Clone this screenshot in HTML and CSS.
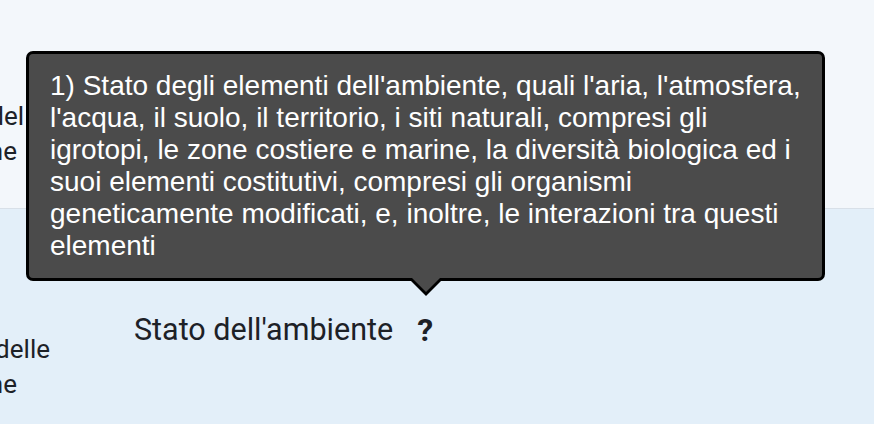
FILE: index.html
```html
<!DOCTYPE html>
<html lang="it">
<head>
<meta charset="utf-8">
<title>Stato dell'ambiente</title>
<link rel="stylesheet" href="styles.css">
</head>
<body>
  <div class="table">
    <div class="row row-top">
      <div class="label">
        <span class="line line-mid">Informazioni sullo stato del</span>
        <span class="line line-short">territorio e sulla gestione</span>
      </div>
    </div>
    <div class="row row-bottom">
      <div class="label">
        <span class="line">Informazioni sullo stato delle</span>
        <span class="line line-short">componenti e sulla gestione</span>
      </div>
      <div class="value">
        <span class="value-text">Stato dell'ambiente</span>
        <span class="help">?</span>
      </div>
    </div>
  </div>

  <div class="tooltip">
    1) Stato degli elementi dell'ambiente, quali l'aria, l'atmosfera,<br>
    l'acqua, il suolo, il territorio, i siti naturali, compresi gli<br>
    igrotopi, le zone costiere e marine, la diversità biologica ed i<br>
    suoi elementi costitutivi, compresi gli organismi<br>
    geneticamente modificati, e, inoltre, le interazioni tra questi<br>
    elementi
  </div>
</body>
</html>
```

FILE: styles.css
```css
html, body {
  margin: 0;
  padding: 0;
}

body {
  width: 874px;
  height: 424px;
  overflow: hidden;
  position: relative;
  background: #e3eff9;
  font-family: Roboto, "Open Sans", sans-serif;
  color: #1d2127;
}

.table {
  display: flex;
  flex-direction: column;
}

.row {
  display: flex;
  align-items: flex-start;
}

.row-top {
  height: 209px;
  box-sizing: border-box;
  background: #f3f7fb;
  border-bottom: 1px solid #d8e0e8;
  padding-top: 99px;
}

.row-bottom {
  height: 214px;
  box-sizing: border-box;
  padding-top: 123px;
}

.label {
  width: 50px;
  flex: none;
  overflow: hidden;
  font-size: 26px;
  line-height: 35px;
  display: flex;
  flex-direction: column;
}

.line {
  display: flex;
  justify-content: flex-end;
  white-space: nowrap;
}

.line-mid {
  margin-right: 26px;
}

.line-short {
  margin-right: 33px;
}

.value {
  margin-left: 84px;
  margin-top: -19px;
  display: flex;
  align-items: center;
  gap: 24px;
  font-size: 30.5px;
  line-height: 34px;
}

.help {
  font-weight: 700;
  font-size: 32px;
}

.tooltip {
  position: absolute;
  left: 26px;
  top: 51px;
  width: 799px;
  height: 230px;
  box-sizing: border-box;
  padding: 16px 20px 0 21px;
  background: #4b4b4b;
  border: 3px solid #000;
  border-radius: 7px;
  color: #fff;
  font-family: "Liberation Sans", Arial, sans-serif;
  font-size: 28px;
  line-height: 32px;
  white-space: nowrap;
}

.tooltip::before,
.tooltip::after {
  content: "";
  position: absolute;
  top: 100%;
  width: 0;
  height: 0;
  border-style: solid;
  border-color: transparent;
}

.tooltip::before {
  left: 379px;
  border-width: 18px 18px 0 18px;
  border-top-color: #000;
}

.tooltip::after {
  left: 383px;
  border-width: 14px 14px 0 14px;
  border-top-color: #4b4b4b;
}
```
